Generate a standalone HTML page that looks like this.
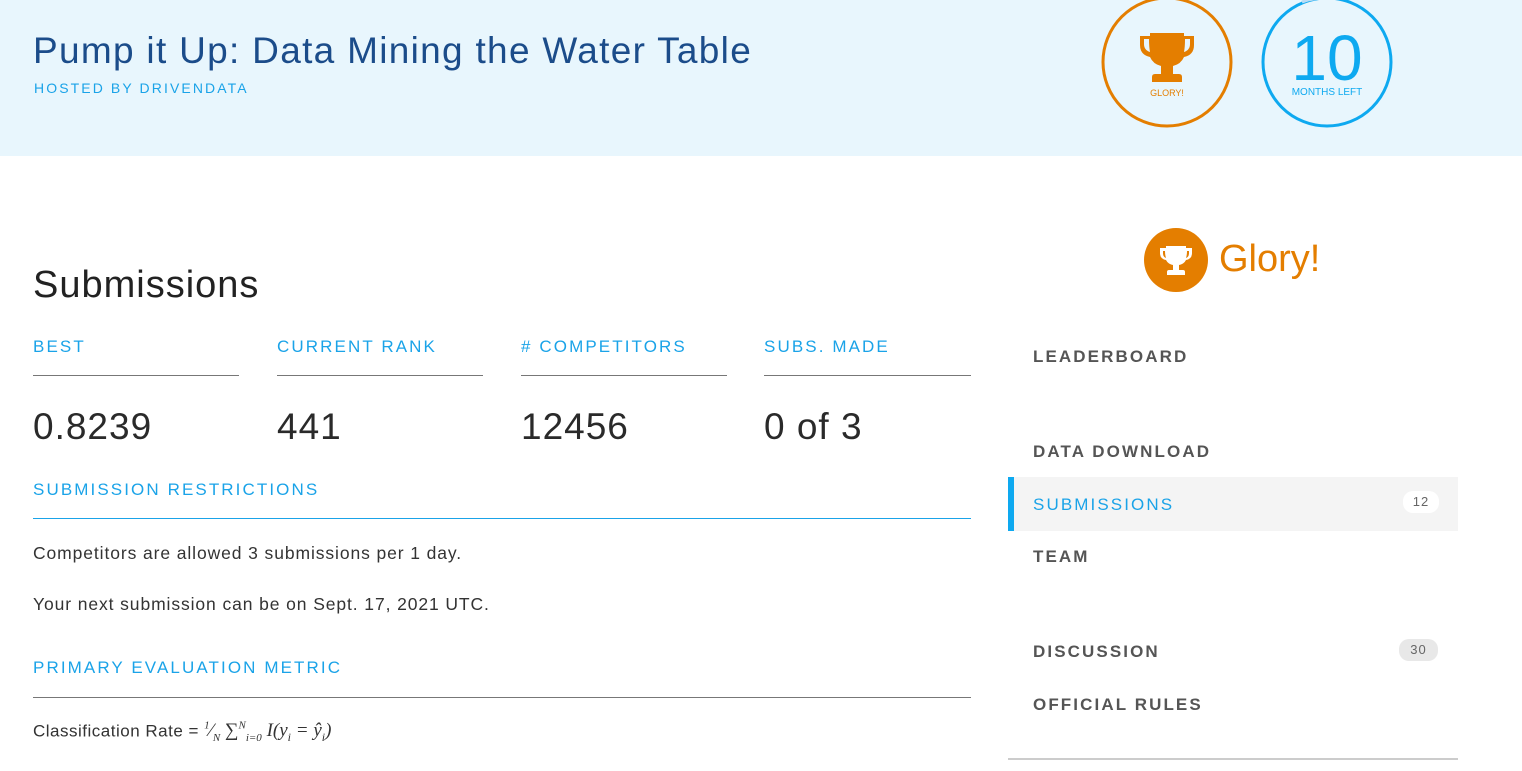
<!DOCTYPE html>
<html><head><style>
body{margin:0;width:1522px;height:771px;overflow:hidden;background:#fff;font-family:"Liberation Sans",sans-serif;position:relative}
.a{position:absolute;white-space:nowrap}
.hdr{position:absolute;left:0;top:0;width:1522px;height:156px;background:#e8f6fd}
.lab{font-size:17px;letter-spacing:2.1px;color:#1aa3e8}
.line{position:absolute;height:1px;background:#777}
.big{font-size:37px;color:#2a2a2a;letter-spacing:1px}
.nav{font-size:17px;letter-spacing:2.1px;color:#555;font-weight:bold}
.badge{position:absolute;border-radius:10px;font-size:13px;color:#666;text-align:center;letter-spacing:1px}
.txt{font-size:17.5px;color:#333;letter-spacing:0.9px}
</style></head><body>
<div class="hdr"></div>
<div class="a" style="left:33px;top:30px;font-size:37px;color:#1b4c8a;letter-spacing:1.3px">Pump it Up: Data Mining the Water Table</div>
<div class="a" style="left:34px;top:80px;font-size:14px;letter-spacing:2.1px;color:#1aa3e8">HOSTED BY DRIVENDATA</div>
<svg class="a" style="left:1100px;top:0" width="300" height="130">
<circle cx="67" cy="62" r="64" fill="none" stroke="#e47e00" stroke-width="3"/>
<path d="M50 33h34v3h10v9q0 10-10 12q-3 7-11 9v8h6q3 0 3 3v5h-30v-5q0-3 3-3h6v-8q-8-2-11-9q-10-2-10-12v-9h10zM44 39v5q0 6 6 8q-1-5-1-13zM90 39h-5q0 8-1 13q6-2 6-8z" fill="#e47e00"/>
<text x="67" y="96" font-size="9" fill="#e47e00" text-anchor="middle" font-family="Liberation Sans">GLORY!</text>
<circle cx="227" cy="62" r="64" fill="none" stroke="#0ea9f0" stroke-width="3"/>
<path d="M202 2 A64 64 0 0 1 227 -2" fill="none" stroke="#b8dcf5" stroke-width="3"/>
<text x="227" y="80" font-size="64" fill="#0ea9f0" text-anchor="middle" font-family="Liberation Sans">10</text>
<text x="227" y="95" font-size="10" fill="#0ea9f0" text-anchor="middle" font-family="Liberation Sans">MONTHS LEFT</text>
</svg>
<div class="a" style="left:33px;top:264px;font-size:38px;color:#222;letter-spacing:1px">Submissions</div>
<div class="a lab" style="left:33px;top:337px">BEST</div>
<div class="a lab" style="left:277px;top:337px">CURRENT RANK</div>
<div class="a lab" style="left:521px;top:337px"># COMPETITORS</div>
<div class="a lab" style="left:764px;top:337px">SUBS. MADE</div>
<div class="line" style="left:33px;top:375px;width:206px"></div>
<div class="line" style="left:277px;top:375px;width:206px"></div>
<div class="line" style="left:521px;top:375px;width:206px"></div>
<div class="line" style="left:764px;top:375px;width:207px"></div>
<div class="a big" style="left:33px;top:406px">0.8239</div>
<div class="a big" style="left:277px;top:406px">441</div>
<div class="a big" style="left:521px;top:406px">12456</div>
<div class="a big" style="left:764px;top:406px">0 of 3</div>
<div class="a lab" style="left:33px;top:480px">SUBMISSION RESTRICTIONS</div>
<div class="line" style="left:33px;top:518px;width:938px;background:#1aa3e8"></div>
<div class="a txt" style="left:33px;top:543px">Competitors are allowed 3 submissions per 1 day.</div>
<div class="a txt" style="left:33px;top:594px">Your next submission can be on Sept. 17, 2021 UTC.</div>
<div class="a lab" style="left:33px;top:658px">PRIMARY EVALUATION METRIC</div>
<div class="line" style="left:33px;top:697px;width:938px"></div>
<div class="a" style="left:33px;top:720px;font-size:17px;color:#333;letter-spacing:0.5px">Classification Rate = <span style="font-family:'Liberation Serif',serif;font-style:italic;font-size:19px;letter-spacing:0"><sup style="font-size:11px">1</sup>&frasl;<sub style="font-size:11px">N</sub> &sum;<sup style="font-size:11px">N</sup><sub style="font-size:11px">i=0</sub> I(y<sub style="font-size:12px">i</sub> = ŷ<sub style="font-size:12px">i</sub>)</span></div>
<svg class="a" style="left:1144px;top:228px" width="64" height="64"><circle cx="32" cy="32" r="32" fill="#e47e00"/><path d="M22 18h20v2h6v5q0 6-6 7q-2 4-7 5v5h4q2 0 2 2v3h-18v-3q0-2 2-2h4v-5q-5-1-7-5q-6-1-6-7v-5h6zM19 23v2q0 4 3 5q-1-3-1-7zM45 23h-2q0 4-1 7q3-1 3-5z" fill="#fff"/></svg>
<div class="a" style="left:1219px;top:238px;font-size:38px;color:#e47e00">Glory!</div>
<div class="a nav" style="left:1033px;top:347px">LEADERBOARD</div>
<div class="a nav" style="left:1033px;top:442px">DATA DOWNLOAD</div>
<div class="a" style="left:1008px;top:477px;width:450px;height:54px;background:#f4f4f4"></div>
<div class="a" style="left:1008px;top:477px;width:6px;height:54px;background:#0ea9f0"></div>
<div class="a nav" style="left:1033px;top:495px;color:#1aa3e8;font-weight:normal">SUBMISSIONS</div>
<div class="badge" style="left:1403px;top:491px;width:36px;height:22px;line-height:22px;background:#fff">12</div>
<div class="a nav" style="left:1033px;top:547px">TEAM</div>
<div class="a nav" style="left:1033px;top:642px">DISCUSSION</div>
<div class="badge" style="left:1399px;top:639px;width:39px;height:22px;line-height:22px;background:#e8e8e8">30</div>
<div class="a nav" style="left:1033px;top:695px">OFFICIAL RULES</div>
<div class="a" style="left:1008px;top:758px;width:450px;height:2px;background:#ccc"></div>
</body></html>
